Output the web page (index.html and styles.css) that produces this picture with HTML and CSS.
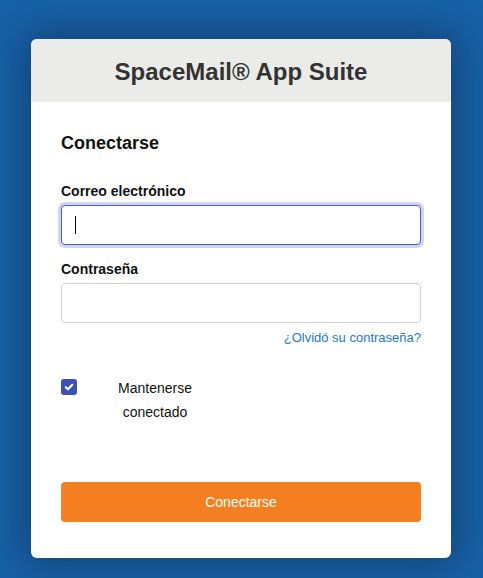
FILE: index.html
```html
<!DOCTYPE html>
<html lang="es">
<head>
<meta charset="utf-8">
<title>SpaceMail® App Suite</title>
<link rel="stylesheet" href="styles.css">
</head>
<body>
<div class="page">
  <div class="card">
    <div class="card-header">
      <h1 class="title">SpaceMail® App Suite</h1>
    </div>
    <form class="card-body">
      <h2 class="heading">Conectarse</h2>
      <label class="label first">Correo electrónico</label>
      <div class="input focused"><span class="caret"></span></div>
      <label class="label">Contraseña</label>
      <div class="input"></div>
      <div class="forgot-row"><a class="forgot" href="#">¿Olvidó su contraseña?</a></div>
      <div class="remember">
        <span class="checkbox">
          <svg width="10" height="10" viewBox="0 0 10 10"><path d="M1.8 5.2 L4 7.3 L8.3 2.8" fill="none" stroke="#fff" stroke-width="2.1" stroke-linecap="round" stroke-linejoin="round"/></svg>
        </span>
        <span class="remember-text">Mantenerse conectado</span>
      </div>
      <button type="button" class="submit">Conectarse</button>
    </form>
  </div>
</div>
</body>
</html>
```
FILE: styles.css
```css
html, body {
  margin: 0;
  padding: 0;
}
body {
  background: #1862a8;
  font-family: "Liberation Sans", Arial, sans-serif;
  height: 578px;
  overflow: hidden;
}
.page {
  display: flex;
  justify-content: flex-start;
  padding-top: 39px;
  padding-left: 31px;
}
.card {
  width: 420px;
  background: #fff;
  border-radius: 6px;
  overflow: hidden;
  box-shadow: 0 0 40px 8px rgba(10, 30, 60, 0.45);
}
.card-header {
  background: #ebebe9;
  height: 63px;
  display: flex;
  align-items: center;
  justify-content: center;
}
.title {
  margin: 0;
  font-size: 24px;
  font-weight: bold;
  color: #333;
  line-height: 28px;
  padding-top: 2px;
}
.card-body {
  padding: 30px 30px 36px;
  display: flex;
  flex-direction: column;
}
.heading {
  margin: 0;
  font-size: 18px;
  line-height: 22px;
  font-weight: bold;
  color: #111;
}
.label {
  font-size: 14px;
  line-height: 17px;
  font-weight: bold;
  color: #111;
  margin-top: 16px;
  margin-bottom: 5px;
}
.label.first {
  margin-top: 29px;
}
.input {
  box-sizing: border-box;
  height: 40px;
  border: 1px solid #cfd3d8;
  border-radius: 4px;
  background: #fff;
  display: flex;
  align-items: center;
  padding-left: 13px;
}
.input.focused {
  border-color: #4a5cbf;
  box-shadow: 0 0 0 3px #d1d6ee;
}
.caret {
  width: 1px;
  height: 18px;
  background: #000;
}
.forgot-row {
  display: flex;
  justify-content: flex-end;
  margin-top: 7px;
}
.forgot {
  font-size: 13px;
  line-height: 16px;
  color: #1f78cc;
  text-decoration: none;
}
.remember {
  display: flex;
  align-items: flex-start;
  margin-top: 30px;
}
.checkbox {
  width: 16px;
  height: 16px;
  border-radius: 3px;
  background: #3d51b3;
  display: flex;
  align-items: center;
  justify-content: center;
  margin-top: 3px;
}
.remember-text {
  width: 140px;
  margin-left: 8px;
  font-size: 14px;
  line-height: 24px;
  color: #111;
  text-align: center;
  padding: 0 28px;
  box-sizing: border-box;
}
.submit {
  margin-top: 58px;
  height: 40px;
  border: none;
  border-radius: 4px;
  background: #f47f20;
  color: #fff;
  font-family: "Liberation Sans", Arial, sans-serif;
  font-size: 14px;
}
```
